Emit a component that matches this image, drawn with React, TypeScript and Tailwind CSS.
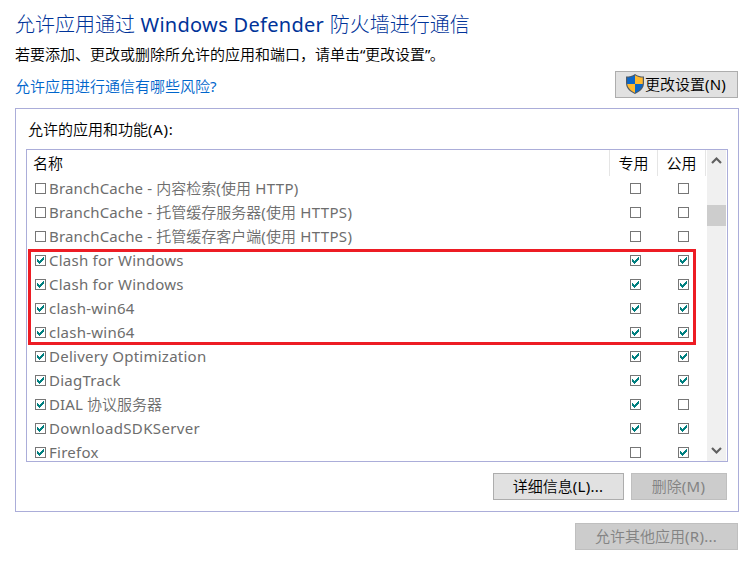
import type { ReactNode } from "react";

type Item = { name: string; on: boolean; priv: boolean; pub: boolean };

const items: Item[] = [
  { name: "BranchCache - 内容检索(使用 HTTP)", on: false, priv: false, pub: false },
  { name: "BranchCache - 托管缓存服务器(使用 HTTPS)", on: false, priv: false, pub: false },
  { name: "BranchCache - 托管缓存客户端(使用 HTTPS)", on: false, priv: false, pub: false },
  { name: "Clash for Windows", on: true, priv: true, pub: true },
  { name: "Clash for Windows", on: true, priv: true, pub: true },
  { name: "clash-win64", on: true, priv: true, pub: true },
  { name: "clash-win64", on: true, priv: true, pub: true },
  { name: "Delivery Optimization", on: true, priv: true, pub: true },
  { name: "DiagTrack", on: true, priv: true, pub: true },
  { name: "DIAL 协议服务器", on: true, priv: true, pub: false },
  { name: "DownloadSDKServer", on: true, priv: true, pub: true },
  { name: "Firefox", on: true, priv: false, pub: true },
];

// Latin runs are tracked slightly wider; Chinese glyphs keep their full-em pitch.
function Mixed({ text }: { text: string }) {
  const parts = text.split(/([\x20-\x7e]+)/);
  const tracking = (part: string, i: number) => {
    if (part.includes("SDK")) return "tracking-[0.36px]";
    if (parts[0] === "" && parts.length > 3) return i === 1 ? "tracking-[0.14px]" : "tracking-[0.33px]";
    if (parts[0] === "" && parts[2] !== "") return "tracking-[0.14px]";
    return "tracking-[0.25px]";
  };
  return (
    <span>
      {parts.map((part, i) =>
        i % 2 ? (
          <span key={i} className={`whitespace-pre ${tracking(part, i)}`}>{part}</span>
        ) : (
          part
        ),
      )}
    </span>
  );
}

function Check({ on }: { on: boolean }) {
  return (
    <span className="flex h-[11px] w-[11px] shrink-0 border border-[#767676] bg-white">
      {on && (
        <svg width="9" height="9" viewBox="0 0 9 9" shapeRendering="crispEdges">
          <path d="M1 3h1v1h1v1h1v-1h1v-1h1v-1h1v-1h1v3h-1v1h-1v1h-1v1h-1v1h-1v-1h-1v-1h-1z" fill="#008080" />
        </svg>
      )}
    </span>
  );
}

function Shield() {
  return (
    <svg width="20" height="22" viewBox="0 0 20 22" className="-ml-px shrink-0">
      <defs>
        <clipPath id="shield">
          <path d="M10 2.2C7.6 4 5 4.5 2.2 4.6V10c0 4.600 3.400 7.600 7.800 9.800 4.400-2.200 7.800-5.200 7.800-9.800V4.600C15 4.500 12.400 4 10 2.200z" />
        </clipPath>
      </defs>
      <path d="M10 1C7.500 3 4.500 3.500 1 3.600V10c0 5.400 4 8.700 9 11 5-2.300 9-5.600 9-11V3.600C15.500 3.500 12.500 3 10 1z" fill="#505a64" />
      <g clipPath="url(#shield)">
        <path d="M0 0h10v11H0zM10 11h10v11H10z" fill="#0b66c8" />
        <path d="M10 0h10v11H10zM0 11h10v11H0z" fill="#ffb92e" />
      </g>
    </svg>
  );
}

function Button({ className, disabled, children }: { className: string; disabled?: boolean; children: ReactNode }) {
  return (
    <button
      disabled={disabled}
      className={`flex h-[27px] items-center justify-center border pr-px pb-[2px] whitespace-nowrap ${
        disabled ? "border-[#bfbfbf] bg-[#cccccc] text-[#838383]" : "border-[#adadad] bg-[#e1e1e1] text-black"
      } ${className}`}
    >
      {children}
    </button>
  );
}

export default function App() {
  return (
    <main className="h-[564px] w-[755px] overflow-hidden bg-white pl-[15px] font-['Noto_Sans','Noto_Sans_CJK_SC_DemiLight','Noto_Sans_CJK_SC',sans-serif] text-[15px] leading-6 whitespace-nowrap text-black">
      <h1 className="pt-[10px] font-['Noto_Sans','Noto_Sans_CJK_SC_Light','Noto_Sans_CJK_SC',sans-serif] text-[20px] leading-[30px] text-[#003399]">
        允许应用通过<span className="tracking-[0.3px]"> Windows Defender </span>防火墙进行通信
      </h1>
      <p className="mt-[2px]">
        若要添加、更改或删除所允许的应用和端口，请单击<span className="tracking-[-0.5px]">“</span>更改设置<span className="tracking-[-0.5px]">”</span>。
      </p>
      <div className="mt-[5px] flex h-[37px] w-[723px] justify-between">
        <a className="mt-[3px] text-[#0066cc]">允许应用进行通信有哪些风险?</a>
        <Button className="w-[123px]">
          <Shield />
          <Mixed text="更改设置(N)" />
        </Button>
      </div>
      <section className="h-[404px] w-[724px] border border-[#abadd9] pl-[10px]">
        <h2 className="h-[40px] pt-[8px] pl-[2px]">
          允许的应用和功能<span className="tracking-[0.7px]">(A):</span>
        </h2>
        <div className="relative flex h-[313px] w-[702px] border border-[#abadd9]">
          <div className="w-[680px] overflow-hidden">
            <div className="flex h-[26px] leading-[26px]">
              <span className="w-[583px] border-r border-[#e5e5e5] pl-[6px]">名称</span>
              <span className="w-[48px] border-r border-[#e5e5e5] text-center">专用</span>
              <span className="w-[48px] border-r border-[#e5e5e5] text-center">公用</span>
            </div>
            {items.map((item, i) => (
              <div key={i} className="flex h-6 items-center text-[#6d6d6d]">
                <div className="flex w-[595px] items-center gap-[3px] pl-[8px]">
                  <Check on={item.on} />
                  <Mixed text={item.name} />
                </div>
                <div className="w-[48px] pl-[8px]"><Check on={item.priv} /></div>
                <div className="pl-[8px]"><Check on={item.pub} /></div>
              </div>
            ))}
          </div>
          <div className="flex w-[19px] flex-col items-center bg-[#f0f0f0]">
            <svg width="19" height="20" viewBox="0 0 19 20"><path d="M5 13l4.500-4.500L14 13" fill="none" stroke="#606060" strokeWidth="2.200" /></svg>
            <div className="mt-[35px] h-[21px] w-full bg-[#cdcdcd]" />
            <svg className="mt-auto" width="19" height="20" viewBox="0 0 19 20"><path d="M5 7l4.500 4.500L14 7" fill="none" stroke="#606060" strokeWidth="2.200" /></svg>
          </div>
          <div className="absolute top-[99px] left-[1px] h-[96px] w-[668px] border-[3px] border-[#ed1c24]" />
        </div>
        <div className="mt-[11px] flex gap-[7px] pl-[467px]">
          <Button className="w-[131px]"><Mixed text="详细信息(L)..." /></Button>
          <Button className="w-[96px]" disabled><Mixed text="删除(M)" /></Button>
        </div>
      </section>
      <div className="mt-[11px] flex w-[723px] justify-end">
        <Button className="w-[163px]" disabled><Mixed text="允许其他应用(R)..." /></Button>
      </div>
    </main>
  );
}
